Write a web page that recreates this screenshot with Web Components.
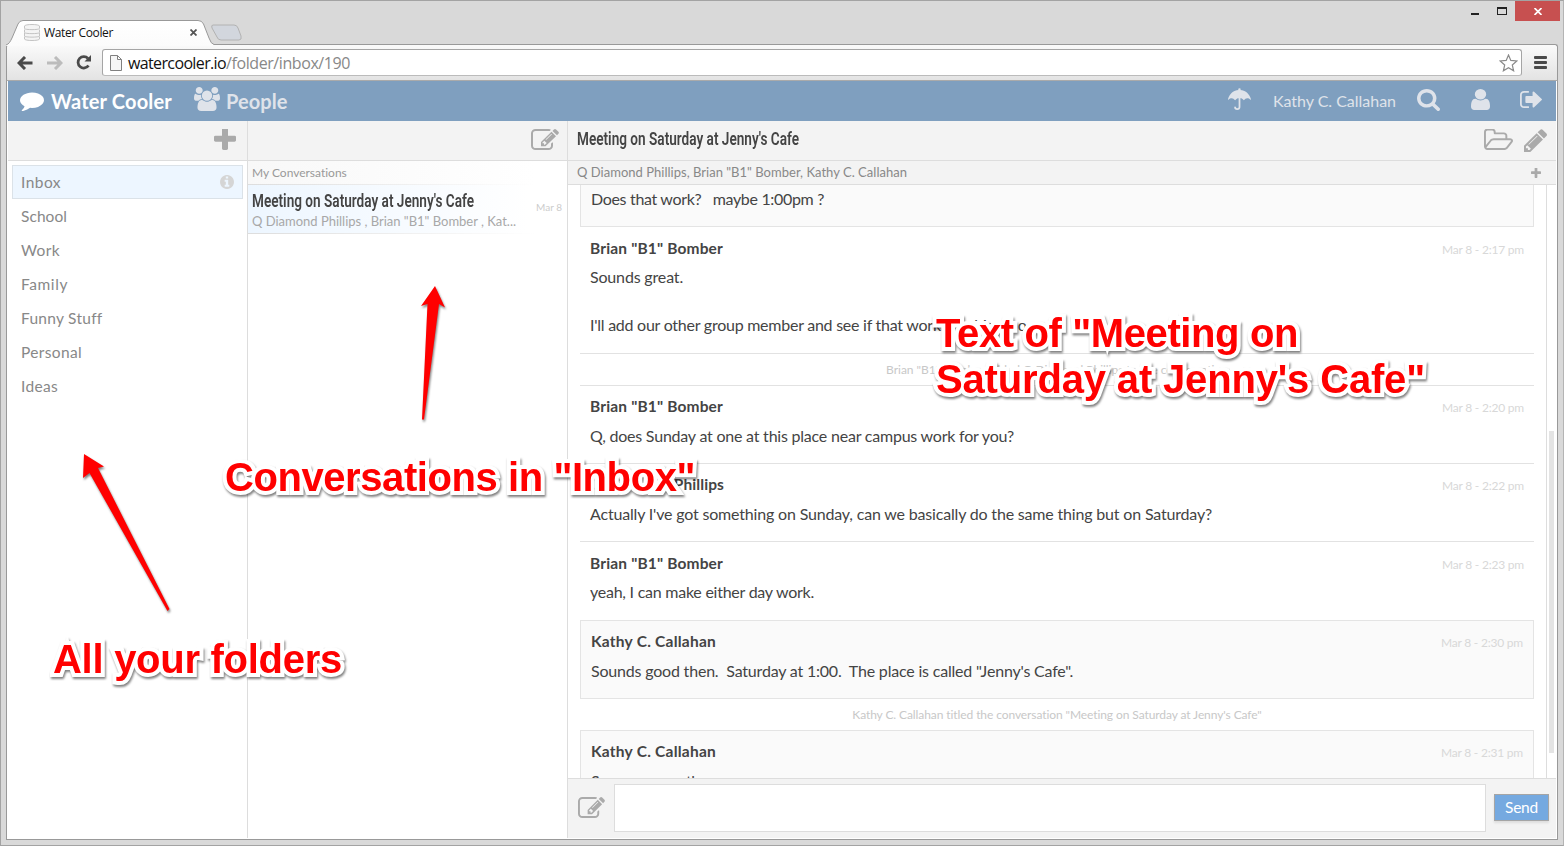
<!DOCTYPE html>
<html lang="en">
<head>
<meta charset="utf-8">
<title>Water Cooler</title>
<style>
html,body{margin:0;height:100%;overflow:hidden}
body{font-family:Lato,"Open Sans",sans-serif;color:#444}
</style>
</head>
<body>
<browser-window>
  <water-cooler></water-cooler>
</browser-window>
<note-layer></note-layer>
<script>
const define = (name, css, html, setup) => customElements.define(name, class extends HTMLElement {
  connectedCallback() {
    if (this.shadowRoot) return;
    const root = this.attachShadow({ mode: 'open' });
    root.innerHTML = `<style>*{box-sizing:border-box}${css}</style>${html}`;
    if (setup) setup(this, root);
  }
});

/* ---------- browser frame ---------- */
define('browser-window', `
:host{display:grid;grid-template-rows:43px 37px 1fr 5px;width:1564px;height:846px;background:#d9d9d9;border:1px solid #a3a3a3;border-right-color:#b4b4b4;box-sizing:border-box}
.page{margin:0 5px 0 5px;border:1px solid #999;border-top:0;background:#fff;padding:0 1px 1px 1px;overflow:hidden;min-height:0;display:grid}
`, `<browser-tabs></browser-tabs><browser-bar></browser-bar><div class="page"><slot></slot></div>`);

define('browser-tabs', `
:host{display:flex;justify-content:space-between;position:relative}
.tabs{display:flex;align-items:flex-end;padding-left:5px}
.tab{position:relative;width:206px;height:25px;display:flex;align-items:center;font:12px/16px "Open Sans",sans-serif;color:#111;padding:0 15px 0 18px;margin-bottom:-1px}
.tab>svg.bg{position:absolute;left:0;top:0}
.tab>*{position:relative}
.tab .name{margin-left:4px;flex:1}
.new{margin:0 0 2px -2px}
.win{display:flex;align-items:flex-start}
.close{width:45px;height:20px;background:#c75050;margin-right:3px;display:grid;place-items:center}
.min{width:8px;height:2px;background:#222;margin:12px 18px 0 0}
.max{width:10px;height:8px;border:1px solid #222;border-top-width:2px;margin:6px 8px 0 0}
`, `
<div class="tabs">
  <div class="tab">
    <svg class="bg" width="208" height="26"><defs><linearGradient id="g" x2="0" y2="1"><stop offset="0" stop-color="#fff"/><stop offset="1" stop-color="#fbfbfb"/></linearGradient></defs>
      <path d="M0 25C3 24 4 22 6 18L12 4Q13.500 .5 17 .5H192Q196 .5 197.500 4L203 18Q205 24 208 24.500V26H0z" fill="url(#g)"/>
      <path d="M0 25C3 24 4 22 6 18L12 4Q13.500 .5 17 .5H192Q196 .5 197.500 4L203 18Q205 24 208 24.500" fill="none" stroke="#999"/></svg>
    <svg width="16" height="17" viewBox="0 0 16 17" fill="#f4f4f4" stroke="#c4c4c4"><path d="M.5 2C.5 0 15.500 0 15.500 2V4.500C15.500 6 .5 6 .5 4.500zM.5 5.500V8.500C.5 10 15.500 10 15.500 8.500V5.500M.5 9V12C.5 13.500 15.500 13.500 15.500 12V9M.5 12.500V15C.5 17 15.500 17 15.500 15V12.500"/></svg>
    <fit-text class="name" w="69">Water Cooler</fit-text>
    <svg width="7" height="7" stroke="#555" stroke-width="1.800"><path d="M.5 .5L6.500 6.500M6.500 .5L.5 6.500"/></svg>
  </div>
  <svg class="new" width="32" height="18"><path d="M3 1H24Q27 1 28 4L31 12Q32 16 29 16H11Q8 16 7 13L2 4Q1 1 3 1z" fill="#d2d6dd" stroke="#b2b2b2"/></svg>
</div>
<div class="win"><div class="min"></div><div class="max"></div><div class="close"><svg width="8" height="7" stroke="#fff" stroke-width="1.700"><path d="M.5 0L7.500 7M7.500 0L.5 7"/></svg></div></div>`);

define('browser-bar', `
:host{display:flex;align-items:center;margin:0 5px 0 5px;height:37px;box-sizing:border-box;background:linear-gradient(#fafafa,#e3e3e3);border:1px solid #999;border-bottom-color:#aaa;border-radius:3px 3px 0 0;padding:0 10px 0 10px}
.url{flex:1;height:27px;margin:0 12px 0 10px;background:#fff;border:1px solid #a5a5a5;border-bottom-color:#bbb;border-radius:3px;display:flex;align-items:center;padding:0 3px 0 7px;font:16px/24px "Open Sans",sans-serif;color:#888}
.url b{font-weight:400;color:#111;margin-left:6px}
.url .star{margin-left:auto}
.back{margin-right:14px}.fwd{margin-right:13px}
.menu{display:grid;gap:2px}.menu i{width:13px;height:3px;background:#4a4a4a;border-radius:1px}
`, `
<svg class="back" width="16" height="14" fill="none" stroke="#4a4a4a" stroke-width="3"><path d="M15.500 7H3M8 1L2 7L8 13"/></svg>
<svg class="fwd" width="16" height="14" fill="none" stroke="#bcbcbc" stroke-width="3"><path d="M0 7H13M8 1L14 7L8 13"/></svg>
<svg width="16" height="15" viewBox="0 0 16 15"><path d="M12.500 10.500A5.700 5.700 0 1 1 12 3.500" fill="none" stroke="#4a4a4a" stroke-width="2.800"/><path d="M15 0V6.500H8.500z" fill="#4a4a4a"/></svg>
<div class="url">
  <svg width="12" height="16" fill="#f6f6f6" stroke="#808080"><path d="M.5 .5H7.500L11.500 4.500V15.500H.5zM7.500 .5V4.500H11.500"/></svg>
  <b><fit-text w="98">watercooler.io</fit-text></b><fit-text w="124">/folder/inbox/190</fit-text>
  <svg class="star" width="19" height="18" viewBox="0 0 19 18" fill="#fff" stroke="#8a8a8a" stroke-width="1.200"><path d="M9.500 1L11.800 6.400L17.800 7L13.300 11L14.600 16.800L9.500 13.700L4.400 16.800L5.700 11L1.200 7L7.200 6.400z"/></svg>
</div>
<div class="menu"><i></i><i></i><i></i></div>`);

/* ---------- application ---------- */
define('water-cooler', `
:host{display:grid;grid-template-rows:40px 1fr;min-height:0;overflow:hidden}
.cols{display:grid;grid-template-columns:240px 320px 1fr;min-height:0}
`, `<app-header></app-header><div class="cols"><folder-pane></folder-pane><conversation-pane></conversation-pane><chat-pane></chat-pane></div>`);

define('app-header', `
:host{display:flex;background:#7f9fbf;color:#fff;font-weight:700;font-size:20px;line-height:40px;padding:0 14px 0 12px}
.soft{color:#dfe3ea}
.name{font-weight:400;font-size:16px;margin:0 21px 0 22px}
wc-icon{margin-top:7px}
.r{margin-left:auto;display:flex}
`, `
<wc-icon name="comment" w="24" h="20" style="margin:10px 7px 0 0"></wc-icon><fit-text w="121">Water Cooler</fit-text>
<wc-icon class="soft" name="users" w="26" h="24" style="margin:6px 6px 0 22px"></wc-icon><fit-text class="soft" w="61.500">People</fit-text>
<div class="r soft"><wc-icon name="umbrella" w="23" h="22"></wc-icon>
<fit-text class="name" w="123">Kathy C. Callahan</fit-text>
<wc-icon name="search" w="23" h="22" style="margin-top:8px"></wc-icon><wc-icon name="user" w="19" h="21" style="margin:8px 0 0 31px"></wc-icon><wc-icon name="signout" w="22" h="17" style="margin:10px 0 0 30px"></wc-icon></div>`);

define('folder-pane', `
:host{display:block;border-right:1px solid #ddd;background:#fff}
header{height:40px;background:#f3f3f3;border-bottom:1px solid #ddd;display:flex;justify-content:flex-end;padding:8px 11px 0 0;color:#aaa}
nav{padding:4px}
`, `<header><wc-icon name="plus" w="22" h="21"></wc-icon></header>
<nav><folder-item active w="40">Inbox</folder-item><folder-item w="46">School</folder-item><folder-item w="39">Work</folder-item><folder-item w="47">Family</folder-item><folder-item w="81">Funny Stuff</folder-item><folder-item w="61">Personal</folder-item><folder-item w="37">Ideas</folder-item></nav>`);

define('folder-item', `
:host{display:flex;height:34px;box-sizing:border-box;border:1px solid transparent;padding:0 8px;font-size:15.500px;line-height:32px;color:#888;justify-content:space-between;align-items:center}
:host([active]){background:#edf6ff;border-color:#dbe2e8}
wc-icon{color:#d5d5d5}
:host(:not([active])) wc-icon{display:none}
`, `<span id="t"></span><wc-icon name="info" w="14" h="14"></wc-icon>`,
(el, root) => { root.getElementById('t').innerHTML = `<fit-text w="${el.getAttribute('w')}">${el.textContent}</fit-text>`; });

define('conversation-pane', `
:host{display:block;border-right:1px solid #ddd;background:#fff;min-width:0}
header{height:40px;background:#f3f3f3;border-bottom:1px solid #ddd;display:flex;justify-content:flex-end;padding:8px 8px 0 0;color:#aaa}
.h,.item{position:relative;border-bottom:1px solid;border-image:linear-gradient(90deg,#ddd,#fff 90%) 1}
.h{height:24px;background:linear-gradient(90deg,#f8f8f8,#fff 90%);font-size:12px;line-height:23px;color:#999;padding-left:4px}
.item{height:49px;background:linear-gradient(90deg,#edf6ff,#fff 88%);padding:5px 5px 0 4px;display:flex;justify-content:space-between;line-height:22px}
.t{font:600 18px/22px Roboto,sans-serif;color:#444;height:22px}
.s{font-size:13px;line-height:19px;color:#a8a8a8}
.d{font-size:10px;line-height:35px;color:#ccc}
`, `<header><wc-icon name="edit" w="28" h="21"></wc-icon></header>
<div class="h"><fit-text w="95">My Conversations</fit-text></div>
<div class="item"><div><div class="t"><fit-text squeeze w="222">Meeting on Saturday at Jenny's Cafe</fit-text></div><div class="s"><fit-text w="264">Q Diamond Phillips , Brian "B1" Bomber , Kat...</fit-text></div></div><fit-text class="d" w="26">Mar 8</fit-text></div>`);

define('chat-pane', `
:host{display:grid;grid-template-rows:40px 24px 1fr 60px;min-width:0;min-height:0;background:#fff}
header{background:#f3f3f3;border-bottom:1px solid #ddd;display:flex;padding:0 9px;color:#aaa}
.t{font:600 18px/35px Roboto,sans-serif;color:#444;flex:1}
.who{background:#f3f3f3;border-bottom:1px solid #ddd;display:flex;justify-content:space-between;padding:0 15px 0 9px;font-size:13px;line-height:23px;color:#888}
.who wc-icon{margin-top:7px;color:#aaa}
.view{display:grid;grid-template-columns:1fr 9px;overflow:hidden;min-height:0}
.list{padding:0 12px;border-right:1px solid #ddd;min-height:0}
.thumb{width:5px;height:322px;background:#e4e4e4;margin:246px 0 0 2px}
`, `<header><div class="t"><fit-text squeeze w="222">Meeting on Saturday at Jenny's Cafe</fit-text></div><wc-icon name="folder" w="29" h="21" style="margin:8px 11px 0 0"></wc-icon><wc-icon name="pencil" w="23" h="23" style="margin-top:8px"></wc-icon></header>
<div class="who"><fit-text w="330">Q Diamond Phillips, Brian "B1" Bomber, Kathy C. Callahan</fit-text><wc-icon name="plus" w="10" h="10"></wc-icon></div>
<div class="view"><div class="list">
<chat-message mine cut style="height:42px"><fit-text w="233">Does that work?   maybe 1:00pm ?</fit-text></chat-message>
<chat-message low from='Brian "B1" Bomber' w="133" time="2:17" style="height:127px"><fit-text w="93">Sounds great.</fit-text><br><br><fit-text w="440">I'll add our other group member and see if that works for him too.</fit-text></chat-message>
<chat-event line w="342">Brian "B1" Bomber added Q Diamond Phillips to the conversation</chat-event>
<chat-message from='Brian "B1" Bomber' w="133" time="2:20"><fit-text w="424">Q, does Sunday at one at this place near campus work for you?</fit-text></chat-message>
<chat-message from="Q Diamond Phillips" w="134" time="2:22"><fit-text w="622">Actually I've got something on Sunday, can we basically do the same thing but on Saturday?</fit-text></chat-message>
<chat-message last low from='Brian "B1" Bomber' w="133" time="2:23"><fit-text w="224">yeah, I can make either day work.</fit-text></chat-message>
<chat-message mine from="Kathy C. Callahan" w="125" time="2:30"><fit-text w="482">Sounds good then.  Saturday at 1:00.  The place is called "Jenny's Cafe".</fit-text></chat-message>
<chat-event w="410">Kathy C. Callahan titled the conversation "Meeting on Saturday at Jenny's Cafe"</chat-event>
<chat-message mine from="Kathy C. Callahan" w="125" time="2:31"><fit-text w="134">See everyone there.</fit-text></chat-message>
</div><div class="thumb"></div></div>
<chat-composer></chat-composer>`);

define('chat-message', `
:host{display:block;box-sizing:border-box;height:78px;border-bottom:1px solid #e2e2e2;padding:8px 10px 0;font-size:16px;line-height:24px;color:#444}
:host([last]){border-bottom-color:transparent}
:host([mine]){height:79px;border:1px solid #e4e4e4;background:#fafafa}
:host([cut]){border-top:0;padding-top:2px}
:host([cut]) .top{display:none}
:host([low]){padding-top:9px}
:host([low]) .top{margin-bottom:5px}
.top{display:flex;justify-content:space-between;margin-bottom:6px;font-size:15.500px}
.top b{font-weight:700}
.top .time{font-size:12px;line-height:27px;height:24px;color:#d8d8d8}
`, `<div class="top"></div><slot></slot>`,
(el, root) => {
  if (el.hasAttribute('cut')) return;
  root.querySelector('.top').innerHTML = `<b><fit-text w="${el.getAttribute('w')}">${el.getAttribute('from')}</fit-text></b><fit-text class="time" w="82">Mar 8 - ${el.getAttribute('time')} pm</fit-text>`;
});

define('chat-event', `
:host{display:flex;box-sizing:border-box;height:31px;justify-content:center;font-size:12px;line-height:32px;color:#c8c8c8}
:host([line]){height:32px;border-bottom:1px solid #e2e2e2}
`, `<span></span>`, (el, root) => { root.querySelector('span').innerHTML = `<fit-text w="${el.getAttribute('w')}">${el.textContent}</fit-text>`; });

define('chat-composer', `
:host{display:flex;background:#f3f3f3;border-top:1px solid #ddd;padding:5px 7px 6px 10px;align-items:flex-start;color:#aaa}
.box{flex:1;height:48px;background:#fff;border:1px solid #ddd;margin:0 8px 0 9px}
.send{width:55px;height:27px;margin-top:10px;background:#75a9e0;border:1px solid #a5a5a5;box-shadow:0 2px 2px #ddd;color:#fff;font-size:15.500px;line-height:25px;text-align:center}
`, `<wc-icon name="edit" w="27" h="21" style="margin-top:13px"></wc-icon><div class="box"></div><div class="send"><fit-text w="33">Send</fit-text></div>`);

/* ---------- callouts lying over the page ---------- */
define('note-layer', `
:host{position:absolute;inset:0;width:1564px;height:846px;pointer-events:none;display:block}
svg{position:absolute;left:0;top:0;filter:drop-shadow(1px 2px 1px rgba(0,0,0,.5))}
`, `<svg width="1564" height="846" fill="#f00"><path d="M435 286L445 307.500L439 304L424 419.500H422L427.500 304L421 306z"/><path d="M84 454L104 466.500L98 468L169.500 609L167.500 611L89.500 473L83 478z"/></svg>
<page-note style="left:225px;top:454px"><fit-text w="470">Conversations in "Inbox"</fit-text></page-note>
<page-note style="left:53px;top:636px"><fit-text w="289">All your folders</fit-text></page-note>
<page-note style="left:936px;top:310px"><fit-text w="362">Text of "Meeting on</fit-text><br><fit-text w="489">Saturday at Jenny's Cafe"</fit-text></page-note>`);

define('page-note', `
:host{position:absolute;white-space:nowrap;font:bold 40px/46px "Liberation Sans",sans-serif;color:#f00;-webkit-text-stroke:8px #fff;paint-order:stroke fill;stroke-linejoin:round;filter:drop-shadow(1px 2px 1px rgba(0,0,0,.5))}
`, `<slot></slot>`);

/* ---------- leaves ---------- */
define('fit-text', `
:host{display:inline-block;white-space:pre;vertical-align:top}
span{display:inline-block;transform-origin:0 50%}
`, `<span><slot></slot></span>`, (el, root) => {
  const s = root.querySelector('span'), w = +el.getAttribute('w'), n = s.getBoundingClientRect().width;
  if (!w || !n) return;
  if (el.hasAttribute('squeeze')) { el.style.width = w + 'px'; s.style.transform = `scaleX(${w / n})`; }
  else s.style.letterSpacing = (w - n) / el.textContent.length + 'px';
});

const ICONS = {
  comment: 'M1792 896q0 174-120 321.500t-326 233-450 85.500q-70 0-145-8-198 175-460 242-49 14-114 22-17 2-30.500-9t-17.500-29v-1q-3-4-.5-12t2-10 4.500-9.500l6-9 7-8.500 8-9q7-8 31-34.500t34.500-38 31-39.500 32.500-51 27-59 26-76q-157-89-247.500-220t-90.500-281q0-130 71-248.500t191-204.500 286-136.500 348-50.500q244 0 450 85.500t326 233 120 321.500z',
  users: 'M593 896q-162 5-265 128h-134q-82 0-138-40.500t-56-118.500q0-353 124-353 6 0 43.500 21t97.500 42.500 119 21.500q67 0 133-23-5 37-5 66 0 139 81 256zm1071 637q0 120-73 189.500t-194 69.500h-874q-121 0-194-69.500t-73-189.500q0-53 3.500-103.500t14-109 26.500-108.500 43-97.500 62-81 85.500-53.500 111.500-20q10 0 43 21.500t73 48 107 48 135 21.500 135-21.500 107-48 73-48 43-21.500q61 0 111.500 20t85.500 53.500 62 81 43 97.500 26.500 108.500 14 109 3.500 103.500zm-1024-1277q0 106-75 181t-181 75-181-75-75-181 75-181 181-75 181 75 75 181zm704 384q0 159-112.500 271.500t-271.500 112.500-271.500-112.500-112.500-271.500 112.500-271.500 271.500-112.500 271.500 112.500 112.500 271.500zm576 225q0 78-56 118.500t-138 40.500h-134q-103-123-265-128 81-117 81-256 0-29-5-66 66 23 133 23 59 0 119-21.500t97.500-42.500 43.500-21q124 0 124 353zm-128-609q0 106-75 181t-181 75-181-75-75-181 75-181 181-75 181 75 75 181z',
  umbrella: 'M832 128Q768 64 832 0Q896 -40 960 0Q1010 64 950 128C1300 150 1620 400 1728 840Q1728 880 1690 870C1600 780 1540 752 1460 752C1360 752 1280 830 1230 900Q1210 915 1190 900C1120 800 1050 752 960 752V1450Q950 1640 730 1664Q510 1640 512 1440Q520 1390 576 1388Q632 1390 640 1440Q645 1530 730 1536Q820 1530 832 1450V752C740 752 680 800 600 900Q580 915 560 900C500 820 430 752 330 752C250 752 180 780 100 870Q60 880 64 840C170 400 480 150 832 128z',
  search: 'M1216 832q0-185-131.500-316.500t-316.500-131.500-316.500 131.500-131.500 316.500 131.500 316.500 316.500 131.500 316.500-131.500 131.500-316.500zm512 832q0 52-38 90t-90 38q-54 0-90-38l-343-342q-179 124-399 124-143 0-273.500-55.500t-225-150-150-225-55.500-273.500 55.500-273.500 150-225 225-150 273.500-55.500 273.500 55.500 225 150 150 225 55.500 273.500q0 220-124 399l343 343q37 37 37 90z',
  user: 'M1536 1399q0 109-62.500 187t-150.500 78h-854q-88 0-150.500-78t-62.500-187q0-85 8.500-160.500t31.500-152 58.500-131 94-89 134.500-34.500q131 128 313 128t313-128q76 0 134.500 34.500t94 89 58.500 131 31.500 152 8.500 160.500zm-256-887q0 159-112.500 271.500t-271.500 112.500-271.500-112.500-112.500-271.500 112.500-271.500 271.500-112.500 271.500 112.500 112.500 271.500z',
  signout: 'M704 1440q0 4 1 20t.5 26.500-3 23.500-10 19.500-20.500 6.500h-320q-119 0-203.500-84.500t-84.500-203.500v-704q0-119 84.500-203.500t203.500-84.500h320q13 0 22.500 9.500t9.500 22.500q0 4 1 20t.5 26.500-3 23.500-10 19.500-20.500 6.500h-320q-66 0-113 47t-47 113v704q0 66 47 113t113 47h312l11.500 1 11.500 3 8 5.500 7 9 2 13.500zm928-544q0 26-19 45l-544 544q-19 19-45 19t-45-19-19-45v-288h-448q-26 0-45-19t-19-45v-384q0-26 19-45t45-19h448v-288q0-26 19-45t45-19 45 19l544 544q19 19 19 45z',
  plus: 'M1600 736v192q0 40-28 68t-68 28h-416v416q0 40-28 68t-68 28h-192q-40 0-68-28t-28-68v-416h-416q-40 0-68-28t-28-68v-192q0-40 28-68t68-28h416v-416q0-40 28-68t68-28h192q40 0 68 28t28 68v416h416q40 0 68 28t28 68z',
  info: 'M1152 1376v-160q0-14-9-23t-23-9h-96v-512q0-14-9-23t-23-9h-320q-14 0-23 9t-9 23v160q0 14 9 23t23 9h96v320h-96q-14 0-23 9t-9 23v160q0 14 9 23t23 9h448q14 0 23-9t9-23zm-128-896v-160q0-14-9-23t-23-9h-192q-14 0-23 9t-9 23v160q0 14 9 23t23 9h192q14 0 23-9t9-23zm640 416q0 209-103 385.500t-279.500 279.500-385.500 103-385.500-103-279.500-279.500-103-385.500 103-385.500 279.500-279.500 385.500-103 385.500 103 279.500 279.500 103 385.500z',
  edit: 'M888 1184l116-116-152-152-116 116v56h96v96h56zm440-720q-16-16-33 1l-350 350q-17 17-1 33t33-1l350-350q17-17 1-33zm80 594v190q0 119-84.500 203.500t-203.500 84.500h-832q-119 0-203.500-84.500t-84.500-203.500v-832q0-119 84.500-203.500t203.500-84.500h832q63 0 117 25 15 7 18 23 3 17-9 29l-49 49q-14 14-32 8-23-6-45-6h-832q-66 0-113 47t-47 113v832q0 66 47 113t113 47h832q66 0 113-47t47-113v-126q0-13 9-22l64-64q15-15 35-7t20 29zm-96-738l288 288-672 672h-288v-288zm444 132l-92 92-288-288 92-92q28-28 68-28t68 28l152 152q28 28 28 68t-28 68z',
  pencil: 'M491 1536l91-91-235-235-91 91v107h128v128h107zm523-928q0-22-22-22-10 0-17 7l-542 542q-7 7-7 17 0 22 22 22 10 0 17-7l542-542q7-7 7-17zm-54-192l416 416-832 832h-416v-416zm683 96q0 53-37 90l-166 166-416-416 166-165q36-38 90-38 53 0 91 38l235 234q37 39 37 91z',
  folder: 'M1781 803q0-35-53-35h-1088q-40 0-85.500 21.500t-71.500 52.500l-294 363q-18 24-18 40 0 35 53 35h1088q40 0 86-22t71-53l294-363q18-22 18-39zm-1141-163h768v-160q0-40-28-68t-68-28h-576q-40 0-68-28t-28-68v-64q0-40-28-68t-68-28h-320q-40 0-68 28t-28 68v853l256-315q44-53 116-87.500t140-34.500zm1269 163q0 62-46 120l-295 363q-43 53-116 87.500t-140 34.500h-1088q-92 0-158-66t-66-158v-960q0-92 66-158t158-66h320q92 0 158 66t66 158v32h544q92 0 158 66t66 158v160h192q54 0 99 24.500t67 70.500q15 32 15 68z'
};
define('wc-icon', `:host{display:block;flex:none}svg{display:block}`,
`<svg preserveAspectRatio="none" fill="currentColor"><path/></svg>`, (el, root) => {
  const svg = root.querySelector('svg'), p = root.querySelector('path');
  svg.setAttribute('width', el.getAttribute('w'));
  svg.setAttribute('height', el.getAttribute('h'));
  p.setAttribute('d', ICONS[el.getAttribute('name')]);
  const v = { comment: [0, 128, 1792, 1664], users: [0, 0, 1920, 1792], umbrella: [64, -30, 1664, 1694], search: [64, 128, 1664, 1664], user: [256, 128, 1280, 1536], signout: [64, 256, 1568, 1280], plus: [192, 224, 1408, 1312], info: [128, 128, 1536, 1536], edit: [0, 128, 1792, 1408], pencil: [128, 128, 1515, 1536], folder: [0, 32, 1909, 1376] }[el.getAttribute('name')];
  svg.setAttribute('viewBox', v.join(' '));
});
</script>
</body>
</html>
